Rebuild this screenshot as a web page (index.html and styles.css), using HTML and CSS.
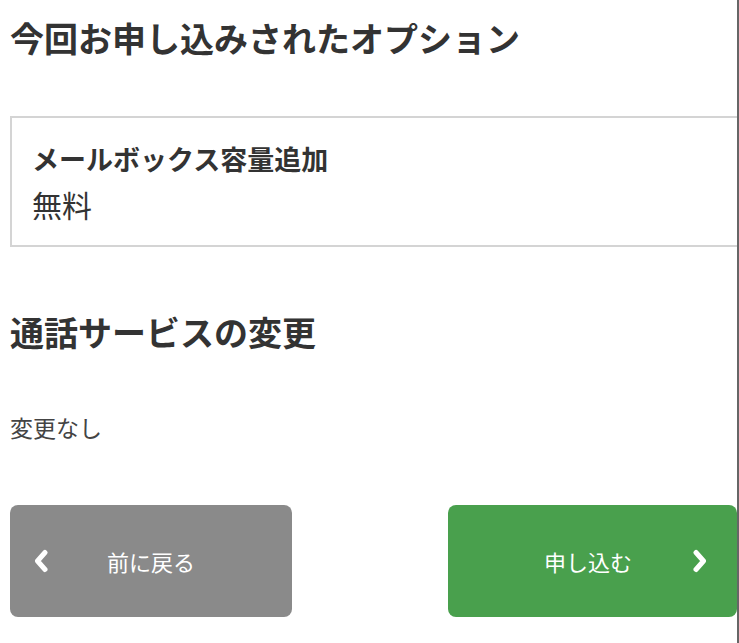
FILE: index.html
```html
<!DOCTYPE html>
<html lang="ja">
<head>
    <meta charset="UTF-8">
    <meta name="viewport" content="width=device-width, initial-scale=1.0">
    <title>お申し込み内容の確認</title>
    <link rel="stylesheet" href="styles.css">
</head>
<body>
    <div class="page">
        <h2 class="section-title">今回お申し込みされたオプション</h2>
        <div class="option-box">
            <p class="option-name">メールボックス容量追加</p>
            <p class="option-price">無料</p>
        </div>

        <h2 class="section-title second">通話サービスの変更</h2>
        <p class="plain-text">変更なし</p>

        <div class="buttons">
            <a class="btn btn-back" href="#">
                <svg class="chevron" width="16" height="24" viewBox="0 0 16 24">
                    <polyline points="12,3.5 4.5,12 12,20.5" fill="none" stroke="#fff" stroke-width="5" stroke-linecap="round" stroke-linejoin="round"/>
                </svg>
                <span class="btn-label">前に戻る</span>
            </a>
            <a class="btn btn-next" href="#">
                <span class="btn-label">申し込む</span>
                <svg class="chevron" width="16" height="24" viewBox="0 0 16 24">
                    <polyline points="4,3.5 11.5,12 4,20.5" fill="none" stroke="#fff" stroke-width="5" stroke-linecap="round" stroke-linejoin="round"/>
                </svg>
            </a>
        </div>
    </div>
</body>
</html>
```

FILE: styles.css
```css
body {
    font-family: "Noto Sans CJK JP", "Noto Sans", sans-serif;
    color: #333;
    background-color: #fff;
    margin: 0;
    padding-left: 10px;
}
.page {
    width: 727px;
    min-height: 100vh;
    border-right: 2px solid #666;
    overflow: hidden;
}
.section-title {
    font-size: 34px;
    line-height: 40px;
    font-weight: bold;
    margin: 18px 0 0;
}
.section-title.second {
    margin-top: 65px;
}
.option-box {
    margin-top: 58px;
    border: 2px solid #d4d4d4;
    border-right: none;
    padding: 24px 20px 23px;
}
.option-box p {
    margin: 0;
}
.option-name {
    font-size: 27px;
    line-height: 34px;
    font-weight: bold;
}
.option-price {
    font-size: 30px;
    line-height: 36px;
    margin-top: 10px !important;
}
.plain-text {
    font-size: 23px;
    line-height: 30px;
    margin: 60px 0 0;
    color: #444;
}
.buttons {
    display: flex;
    justify-content: space-between;
    margin-top: 63px;
}
.btn {
    display: flex;
    align-items: center;
    height: 112px;
    border-radius: 8px;
    color: #fff;
    text-decoration: none;
    font-size: 22px;
    box-sizing: border-box;
}
.btn-back {
    width: 282px;
    background-color: #8a8a8a;
    padding-left: 23px;
}
.btn-back .btn-label {
    margin-left: 58px;
}
.btn-next {
    width: 289px;
    background-color: #49a04d;
    justify-content: flex-end;
    padding-right: 29px;
}
.btn-next .btn-label {
    margin-right: 60px;
}
```
